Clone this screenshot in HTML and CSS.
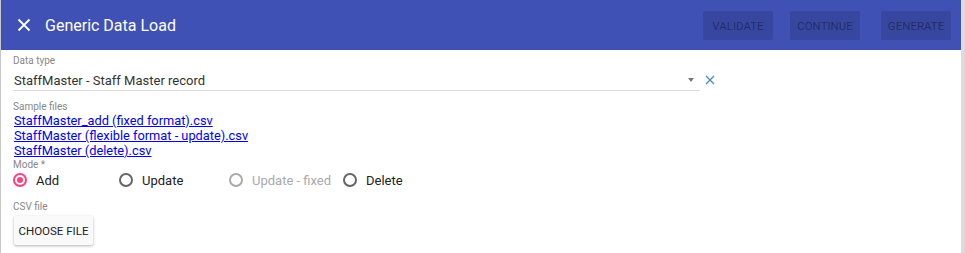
FILE: index.html
```html
<!DOCTYPE html>
<html lang="en">
  <head>
    <meta charset="UTF-8" />
    <title>Generic Data Load</title>
    <link rel="stylesheet" href="styles.css">
  </head>
  <body>
    <div class="dialog">
      <!-- Toolbar -->
      <header class="toolbar">
        <button class="close-btn" aria-label="Close">
          <svg width="14" height="14" viewBox="0 0 14 14">
            <path d="M1.5 1.5 L12.5 12.5 M12.5 1.5 L1.5 12.5" stroke="#fff" stroke-width="1.8" fill="none" />
          </svg>
        </button>
        <h1 class="title">Generic Data Load</h1>
        <div class="actions">
          <button class="action validate" disabled>VALIDATE</button>
          <button class="action continue" disabled>CONTINUE</button>
          <button class="action generate" disabled>GENERATE</button>
        </div>
      </header>

      <div class="content">
        <div class="label">Data type</div>
        <div class="select-row">
          <div class="select">
            <span class="select-value">StaffMaster - Staff Master record</span>
            <span class="arrow"></span>
          </div>
          <svg class="clear" width="10" height="10" viewBox="0 0 10 10">
            <path d="M1 1 L9 9 M9 1 L1 9" stroke="#4f8fb0" stroke-width="1.4" fill="none" />
          </svg>
        </div>

        <div class="label sample-label">Sample files</div>
        <div class="files">
          <a href="#">StaffMaster_add (fixed format).csv</a>
          <a href="#">StaffMaster (flexible format - update).csv</a>
          <a href="#">StaffMaster (delete).csv</a>
        </div>

        <div class="label mode-label">Mode *</div>
        <div class="radios">
          <label class="radio checked"><span class="circle"></span>Add</label>
          <label class="radio"><span class="circle"></span>Update</label>
          <label class="radio disabled"><span class="circle"></span>Update - fixed</label>
          <label class="radio"><span class="circle"></span>Delete</label>
        </div>

        <div class="label csv-label">CSV file</div>
        <button class="choose">CHOOSE FILE</button>
      </div>
    </div>
  </body>
</html>
```

FILE: styles.css
```css
/* Page */
body {
  margin: 0;
  font-family: Roboto, "Liberation Sans", sans-serif;
  background: #fff;
  overflow: hidden;
}

.dialog {
  width: 960px;
  height: 253px;
  border-left: 1px solid #c8c8c8;
  border-right: 4px solid #dcdcdc;
  box-sizing: content-box;
}

/* Blue toolbar */
.toolbar {
  height: 50px;
  background: #3f51b5;
  display: flex;
  align-items: center;
}

.close-btn {
  background: none;
  border: none;
  padding: 0;
  margin-left: 15px;
  width: 16px;
  height: 16px;
  display: flex;
  align-items: center;
  justify-content: center;
}

.title {
  margin: 0 0 0 13px;
  font-size: 16px;
  font-weight: 400;
  color: #fff;
}

.actions {
  margin-left: auto;
  margin-right: 10px;
  display: flex;
  margin-top: 1px;
}

.action {
  width: 70px;
  height: 29px;
  padding: 0;
  border: none;
  border-radius: 2px;
  background: rgba(0, 0, 0, 0.12);
  color: rgba(0, 0, 0, 0.38);
  font-family: inherit;
  font-size: 11.5px;
}

.continue {
  margin-left: 17px;
}

.generate {
  margin-left: 21px;
}

/* Form */
.content {
  padding: 5px 0 0 12px;
  color: #333;
}

.label {
  font-size: 10px;
  line-height: 12px;
  color: #888;
}

.select-row {
  display: flex;
  align-items: center;
  margin-top: 4px;
}

.select {
  width: 687px;
  height: 20px;
  border-bottom: 1px solid #ddd;
  display: flex;
  align-items: center;
  box-sizing: border-box;
  padding-bottom: 1px;
}

.select-value {
  font-size: 13px;
  flex: 1;
  padding-left: 1px;
}

.arrow {
  width: 0;
  height: 0;
  border-left: 3px solid transparent;
  border-right: 3px solid transparent;
  border-top: 4px solid #777;
  margin-right: 6px;
}

.clear {
  margin-left: 5px;
  margin-bottom: 3px;
}

.sample-label {
  margin-top: 10px;
}

.files a {
  display: block;
  font-size: 12.8px;
  line-height: 15px;
  color: #0000ee;
  padding-left: 1px;
}

.mode-label {
  margin-top: 1px;
}

.radios {
  display: grid;
  grid-template-columns: 106px 110px 114px auto;
  height: 18px;
  align-items: center;
}

.radio {
  display: flex;
  align-items: center;
  font-size: 13px;
  color: #222;
}

.circle {
  width: 10px;
  height: 10px;
  border: 2px solid #666;
  border-radius: 50%;
  margin-right: 9px;
  position: relative;
}

.checked .circle {
  border-color: #ff4081;
}

.checked .circle::after {
  content: "";
  position: absolute;
  left: 2px;
  top: 2px;
  width: 6px;
  height: 6px;
  border-radius: 50%;
  background: #ff4081;
}

.disabled {
  color: #aaa;
}

.disabled .circle {
  border-color: #aaa;
}

.csv-label {
  margin-top: 12px;
}

.choose {
  margin-top: 3px;
  margin-left: 1px;
  width: 79px;
  height: 29px;
  padding: 0;
  border: none;
  border-radius: 2px;
  background: #fafafa;
  box-shadow: 0 1px 3px rgba(0, 0, 0, 0.3);
  font-family: inherit;
  font-size: 11.5px;
  color: #222;
}
```
